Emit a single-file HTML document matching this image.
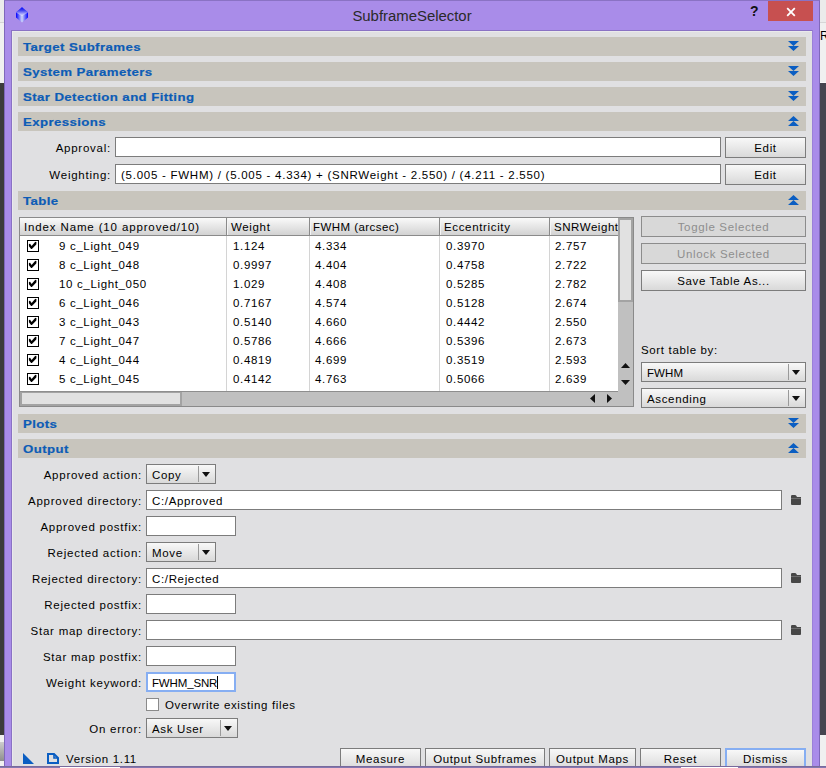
<!DOCTYPE html>
<html><head><meta charset="utf-8">
<style>
*{margin:0;padding:0;box-sizing:border-box}
html,body{width:826px;height:768px;overflow:hidden;background:#f0f0f0}
body{position:relative;font-family:"Liberation Sans",sans-serif;font-size:11.5px;color:#000;letter-spacing:0.65px}
.a{position:absolute}
.frame{left:4px;top:0;width:816px;height:768px;background:#a98ce9;border-left:1px solid #7f68bb;border-right:1px solid #7f68bb;border-top:1px solid #8a72c4}
.content{left:11px;top:30px;width:802px;height:737px;background:#e0e0e2;border-left:1px solid #8a72c4;border-top:1px solid #8a72c4;border-right:1px solid #9a80d8;border-bottom:1px solid #6f5c9f;box-shadow:inset 1px 1px 0 #eaeaec}
.hdr{left:18px;width:788px;height:19px;background:#c8c5bd;color:#0d5cb6;font-weight:bold;letter-spacing:0.35px;line-height:19px;padding-left:4.5px;padding-top:1px}
.hdr span{display:inline-block;transform:scaleX(1.15);transform-origin:0 0;-webkit-text-stroke:0.2px #0d5cb6}
.lbl{text-align:right;white-space:nowrap;line-height:14px;letter-spacing:0.75px}
.inp{background:#fff;border:1px solid #7c7c7c;height:20px;line-height:20px;padding-left:5px;white-space:nowrap}
.btn{border:1px solid #7c7c7c;background:linear-gradient(#f8f8f8,#d9d9d9);height:21px;line-height:21px;text-align:center;white-space:nowrap}
.btnd{border:1px solid #8c8c8c;background:#d8d8d8;color:#8e8e8e;height:21px;line-height:21px;text-align:center}
.combo{border:1px solid #7c7c7c;background:linear-gradient(#f8f8f8,#d9d9d9);height:20px;line-height:20px;padding-left:5px;white-space:nowrap}
.combo .sep{position:absolute;top:1px;bottom:1px;width:1px;background:#9a9a9a}
.combo .arr{position:absolute;top:7px;width:0;height:0;border-left:4.6px solid transparent;border-right:4.6px solid transparent;border-top:5px solid #111}
.chev{position:absolute;right:7px;top:4px}
</style></head><body>
<!-- outside background -->
<div class="a" style="left:0;top:0;width:4px;height:22px;background:#ebebeb"></div>
<div class="a" style="left:0;top:22px;width:4px;height:1px;background:#d4d4d4"></div>
<div class="a" style="left:0;top:83px;width:4px;height:652px;background:#3c3c3c"></div>
<div class="a" style="left:0;top:742px;width:4px;height:19px;background:linear-gradient(#cdcdcd,#8e8e8e)"></div>
<div class="a" style="left:820px;top:0;width:6px;height:22px;background:#ebebeb"></div>
<div class="a" style="left:820px;top:22px;width:6px;height:1px;background:#d6d6d6"></div>
<div class="a" style="left:820px;top:82px;width:6px;height:1px;background:#fafafa"></div>
<div class="a" style="left:820px;top:83px;width:6px;height:652px;background:#45454f"></div>
<div class="a" style="left:820px;top:29px;font-size:12px;letter-spacing:0;line-height:14px">R</div>
<div class="a frame"></div>
<!-- title bar -->
<svg class="a" style="left:15px;top:6px" width="14" height="17" viewBox="0 0 14 17">
<defs><linearGradient id="gy" x1="0" y1="0" x2="0" y2="1"><stop offset="0" stop-color="#0000ff"/><stop offset="0.35" stop-color="#3a3af0"/><stop offset="1" stop-color="#e8e8ff"/></linearGradient>
<linearGradient id="gs" x1="0" y1="0" x2="1" y2="0"><stop offset="0" stop-color="#0000ff"/><stop offset="0.45" stop-color="#c0c4f8"/><stop offset="0.55" stop-color="#c0c4f8"/><stop offset="1" stop-color="#0000ff"/></linearGradient></defs>
<polygon points="7,1 13,6.5 13,11.5 7,16.5 1,11.5 1,6.5" fill="url(#gs)"/>
<polygon points="7,1 13,6.5 7,10 1,6.5" fill="url(#gy)"/>
</svg>
<div class="a" style="left:-1px;top:6px;width:826px;text-align:center;font-size:14.9px;letter-spacing:0;color:#2a2a2a;line-height:20px">SubframeSelector</div>
<div class="a" style="left:750px;top:3px;font-weight:bold;font-size:14px;letter-spacing:0;color:#111;line-height:16px">?</div>
<div class="a" style="left:768px;top:1px;width:45px;height:20px;background:#c75050"></div>
<svg class="a" style="left:786px;top:7px" width="10" height="10" viewBox="0 0 10 10"><path d="M1.2 1.2L8.8 8.8M8.8 1.2L1.2 8.8" stroke="#fff" stroke-width="1.8"/></svg>

<div class="a content"></div>
<!-- headers -->
<div class="a hdr" style="top:37px"><span>Target Subframes</span></div>
<svg class="a" style="left:788px;top:41px" width="11" height="10" viewBox="0 0 11 10"><path d="M0 0H11L5.5 5Z M0 5H11L5.5 10Z" fill="#0b5ec2"/></svg>
<div class="a hdr" style="top:62px"><span>System Parameters</span></div>
<svg class="a" style="left:788px;top:66px" width="11" height="10" viewBox="0 0 11 10"><path d="M0 0H11L5.5 5Z M0 5H11L5.5 10Z" fill="#0b5ec2"/></svg>
<div class="a hdr" style="top:87px"><span>Star Detection and Fitting</span></div>
<svg class="a" style="left:788px;top:91px" width="11" height="10" viewBox="0 0 11 10"><path d="M0 0H11L5.5 5Z M0 5H11L5.5 10Z" fill="#0b5ec2"/></svg>
<div class="a hdr" style="top:112px"><span>Expressions</span></div>
<svg class="a" style="left:788px;top:116px" width="11" height="10" viewBox="0 0 11 10"><path d="M5.5 0L11 5H0Z M5.5 5L11 10H0Z" fill="#0b5ec2"/></svg>
<div class="a hdr" style="top:191px"><span>Table</span></div>
<svg class="a" style="left:788px;top:195px" width="11" height="10" viewBox="0 0 11 10"><path d="M5.5 0L11 5H0Z M5.5 5L11 10H0Z" fill="#0b5ec2"/></svg>
<div class="a hdr" style="top:414px"><span>Plots</span></div>
<svg class="a" style="left:788px;top:418px" width="11" height="10" viewBox="0 0 11 10"><path d="M0 0H11L5.5 5Z M0 5H11L5.5 10Z" fill="#0b5ec2"/></svg>
<div class="a hdr" style="top:439px"><span>Output</span></div>
<svg class="a" style="left:788px;top:443px" width="11" height="10" viewBox="0 0 11 10"><path d="M5.5 0L11 5H0Z M5.5 5L11 10H0Z" fill="#0b5ec2"/></svg>
<!-- expressions -->
<div class="a lbl" style="left:20px;width:91px;top:141px">Approval:</div>
<div class="a inp" style="left:115px;top:137px;width:606px"></div>
<div class="a btn" style="left:725px;top:137px;width:81px">Edit</div>
<div class="a lbl" style="left:20px;width:91px;top:168px">Weighting:</div>
<div class="a inp" style="left:115px;top:164px;width:606px;letter-spacing:0.74px">(5.005 - FWHM) / (5.005 - 4.334) + (SNRWeight - 2.550) / (4.211 - 2.550)</div>
<div class="a btn" style="left:725px;top:164px;width:81px">Edit</div>
<!-- table -->
<div class="a" style="left:19px;top:217px;width:615px;height:190px;border:1px solid #8a8a8a;background:#c0c0c0"></div>
<div class="a" style="left:20px;top:218px;width:598px;height:18px;background:linear-gradient(#fafafa,#d2d2d2);border-bottom:1px solid #8a8a8a"></div>
<div class="a" style="left:20px;top:236px;width:598px;height:155px;background:#fff"></div>
<div class="a" style="left:226px;top:218px;width:1px;height:17px;background:#8a8a8a"></div>
<div class="a" style="left:227px;top:218px;width:1px;height:17px;background:#f4f4f4"></div>
<div class="a" style="left:226px;top:236px;width:1px;height:155px;background:#d4d4d4"></div>
<div class="a" style="left:309px;top:218px;width:1px;height:17px;background:#8a8a8a"></div>
<div class="a" style="left:310px;top:218px;width:1px;height:17px;background:#f4f4f4"></div>
<div class="a" style="left:309px;top:236px;width:1px;height:155px;background:#d4d4d4"></div>
<div class="a" style="left:439px;top:218px;width:1px;height:17px;background:#8a8a8a"></div>
<div class="a" style="left:440px;top:218px;width:1px;height:17px;background:#f4f4f4"></div>
<div class="a" style="left:439px;top:236px;width:1px;height:155px;background:#d4d4d4"></div>
<div class="a" style="left:549px;top:218px;width:1px;height:17px;background:#8a8a8a"></div>
<div class="a" style="left:550px;top:218px;width:1px;height:17px;background:#f4f4f4"></div>
<div class="a" style="left:549px;top:236px;width:1px;height:155px;background:#d4d4d4"></div>
<div class="a" style="left:24px;top:220px;line-height:14px;white-space:nowrap;letter-spacing:0.86px">Index Name (10 approved/10)</div>
<div class="a" style="left:231px;top:220px;line-height:14px;white-space:nowrap">Weight</div>
<div class="a" style="left:313px;top:220px;line-height:14px;white-space:nowrap;letter-spacing:0.45px">FWHM (arcsec)</div>
<div class="a" style="left:444px;top:220px;line-height:14px;white-space:nowrap">Eccentricity</div>
<div class="a" style="left:554px;top:220px;line-height:14px;white-space:nowrap;letter-spacing:0.55px">SNRWeight</div>
<svg class="a" style="left:27px;top:240px" width="12" height="12" viewBox="0 0 12 12"><rect x="0.5" y="0.5" width="11" height="11" fill="#fff" stroke="#000"/><path d="M1.9 4.1L3.1 3.8L4.6 6.1L8.3 1.8L9.5 2.3L9.3 4.5L4.9 9L4.1 9L1.9 6.3Z" fill="#000"/></svg>
<div class="a" style="left:59px;top:239px;line-height:14px;white-space:nowrap">9 c_Light_049</div>
<div class="a" style="left:233px;top:239px;line-height:14px;white-space:nowrap">1.124</div>
<div class="a" style="left:315px;top:239px;line-height:14px;white-space:nowrap">4.334</div>
<div class="a" style="left:446px;top:239px;line-height:14px;white-space:nowrap">0.3970</div>
<div class="a" style="left:555px;top:239px;line-height:14px;white-space:nowrap">2.757</div>
<svg class="a" style="left:27px;top:259px" width="12" height="12" viewBox="0 0 12 12"><rect x="0.5" y="0.5" width="11" height="11" fill="#fff" stroke="#000"/><path d="M1.9 4.1L3.1 3.8L4.6 6.1L8.3 1.8L9.5 2.3L9.3 4.5L4.9 9L4.1 9L1.9 6.3Z" fill="#000"/></svg>
<div class="a" style="left:59px;top:258px;line-height:14px;white-space:nowrap">8 c_Light_048</div>
<div class="a" style="left:233px;top:258px;line-height:14px;white-space:nowrap">0.9997</div>
<div class="a" style="left:315px;top:258px;line-height:14px;white-space:nowrap">4.404</div>
<div class="a" style="left:446px;top:258px;line-height:14px;white-space:nowrap">0.4758</div>
<div class="a" style="left:555px;top:258px;line-height:14px;white-space:nowrap">2.722</div>
<svg class="a" style="left:27px;top:278px" width="12" height="12" viewBox="0 0 12 12"><rect x="0.5" y="0.5" width="11" height="11" fill="#fff" stroke="#000"/><path d="M1.9 4.1L3.1 3.8L4.6 6.1L8.3 1.8L9.5 2.3L9.3 4.5L4.9 9L4.1 9L1.9 6.3Z" fill="#000"/></svg>
<div class="a" style="left:59px;top:277px;line-height:14px;white-space:nowrap">10 c_Light_050</div>
<div class="a" style="left:233px;top:277px;line-height:14px;white-space:nowrap">1.029</div>
<div class="a" style="left:315px;top:277px;line-height:14px;white-space:nowrap">4.408</div>
<div class="a" style="left:446px;top:277px;line-height:14px;white-space:nowrap">0.5285</div>
<div class="a" style="left:555px;top:277px;line-height:14px;white-space:nowrap">2.782</div>
<svg class="a" style="left:27px;top:297px" width="12" height="12" viewBox="0 0 12 12"><rect x="0.5" y="0.5" width="11" height="11" fill="#fff" stroke="#000"/><path d="M1.9 4.1L3.1 3.8L4.6 6.1L8.3 1.8L9.5 2.3L9.3 4.5L4.9 9L4.1 9L1.9 6.3Z" fill="#000"/></svg>
<div class="a" style="left:59px;top:296px;line-height:14px;white-space:nowrap">6 c_Light_046</div>
<div class="a" style="left:233px;top:296px;line-height:14px;white-space:nowrap">0.7167</div>
<div class="a" style="left:315px;top:296px;line-height:14px;white-space:nowrap">4.574</div>
<div class="a" style="left:446px;top:296px;line-height:14px;white-space:nowrap">0.5128</div>
<div class="a" style="left:555px;top:296px;line-height:14px;white-space:nowrap">2.674</div>
<svg class="a" style="left:27px;top:316px" width="12" height="12" viewBox="0 0 12 12"><rect x="0.5" y="0.5" width="11" height="11" fill="#fff" stroke="#000"/><path d="M1.9 4.1L3.1 3.8L4.6 6.1L8.3 1.8L9.5 2.3L9.3 4.5L4.9 9L4.1 9L1.9 6.3Z" fill="#000"/></svg>
<div class="a" style="left:59px;top:315px;line-height:14px;white-space:nowrap">3 c_Light_043</div>
<div class="a" style="left:233px;top:315px;line-height:14px;white-space:nowrap">0.5140</div>
<div class="a" style="left:315px;top:315px;line-height:14px;white-space:nowrap">4.660</div>
<div class="a" style="left:446px;top:315px;line-height:14px;white-space:nowrap">0.4442</div>
<div class="a" style="left:555px;top:315px;line-height:14px;white-space:nowrap">2.550</div>
<svg class="a" style="left:27px;top:335px" width="12" height="12" viewBox="0 0 12 12"><rect x="0.5" y="0.5" width="11" height="11" fill="#fff" stroke="#000"/><path d="M1.9 4.1L3.1 3.8L4.6 6.1L8.3 1.8L9.5 2.3L9.3 4.5L4.9 9L4.1 9L1.9 6.3Z" fill="#000"/></svg>
<div class="a" style="left:59px;top:334px;line-height:14px;white-space:nowrap">7 c_Light_047</div>
<div class="a" style="left:233px;top:334px;line-height:14px;white-space:nowrap">0.5786</div>
<div class="a" style="left:315px;top:334px;line-height:14px;white-space:nowrap">4.666</div>
<div class="a" style="left:446px;top:334px;line-height:14px;white-space:nowrap">0.5396</div>
<div class="a" style="left:555px;top:334px;line-height:14px;white-space:nowrap">2.673</div>
<svg class="a" style="left:27px;top:354px" width="12" height="12" viewBox="0 0 12 12"><rect x="0.5" y="0.5" width="11" height="11" fill="#fff" stroke="#000"/><path d="M1.9 4.1L3.1 3.8L4.6 6.1L8.3 1.8L9.5 2.3L9.3 4.5L4.9 9L4.1 9L1.9 6.3Z" fill="#000"/></svg>
<div class="a" style="left:59px;top:353px;line-height:14px;white-space:nowrap">4 c_Light_044</div>
<div class="a" style="left:233px;top:353px;line-height:14px;white-space:nowrap">0.4819</div>
<div class="a" style="left:315px;top:353px;line-height:14px;white-space:nowrap">4.699</div>
<div class="a" style="left:446px;top:353px;line-height:14px;white-space:nowrap">0.3519</div>
<div class="a" style="left:555px;top:353px;line-height:14px;white-space:nowrap">2.593</div>
<svg class="a" style="left:27px;top:373px" width="12" height="12" viewBox="0 0 12 12"><rect x="0.5" y="0.5" width="11" height="11" fill="#fff" stroke="#000"/><path d="M1.9 4.1L3.1 3.8L4.6 6.1L8.3 1.8L9.5 2.3L9.3 4.5L4.9 9L4.1 9L1.9 6.3Z" fill="#000"/></svg>
<div class="a" style="left:59px;top:372px;line-height:14px;white-space:nowrap">5 c_Light_045</div>
<div class="a" style="left:233px;top:372px;line-height:14px;white-space:nowrap">0.4142</div>
<div class="a" style="left:315px;top:372px;line-height:14px;white-space:nowrap">4.763</div>
<div class="a" style="left:446px;top:372px;line-height:14px;white-space:nowrap">0.5066</div>
<div class="a" style="left:555px;top:372px;line-height:14px;white-space:nowrap">2.639</div>
<div class="a" style="left:618px;top:218px;width:15px;height:84px;background:#e1e1e1;border:2px solid #a3a3a3"></div>
<svg class="a" style="left:621px;top:363px" width="9" height="5" viewBox="0 0 9 5"><path d="M4.5 0L9 5H0Z" fill="#111"/></svg>
<svg class="a" style="left:621px;top:380px" width="9" height="5" viewBox="0 0 9 5"><path d="M0 0H9L4.5 5Z" fill="#111"/></svg>
<div class="a" style="left:20px;top:391px;width:598px;height:1px;background:#8e8e8e"></div>
<div class="a" style="left:20px;top:392px;width:162px;height:14px;background:#e1e1e1;border:2px solid #a3a3a3;border-top:1px solid #a3a3a3"></div>
<svg class="a" style="left:590px;top:394px" width="5" height="9" viewBox="0 0 5 9"><path d="M5 0V9L0 4.5Z" fill="#111"/></svg>
<svg class="a" style="left:607px;top:394px" width="5" height="9" viewBox="0 0 5 9"><path d="M0 0V9L5 4.5Z" fill="#111"/></svg>
<!-- right panel -->
<div class="a btnd" style="left:641px;top:216px;width:165px">Toggle Selected</div>
<div class="a btnd" style="left:641px;top:243px;width:165px">Unlock Selected</div>
<div class="a btn" style="left:641px;top:270px;width:165px">Save Table As...</div>
<div class="a" style="left:641px;top:343px;line-height:14px;white-space:nowrap">Sort table by:</div>
<div class="a combo" style="left:641px;top:362px;width:165px"><span style="letter-spacing:0.1px">FWHM</span><div class="sep" style="left:146px"></div><div class="arr" style="left:150px"></div></div>
<div class="a combo" style="left:641px;top:388px;width:165px">Ascending<div class="sep" style="left:146px"></div><div class="arr" style="left:150px"></div></div>
<!-- output -->
<div class="a lbl" style="left:14px;width:128px;top:468px">Approved action:</div>
<div class="a combo" style="left:146px;top:464px;width:70px">Copy<div class="sep" style="left:51px"></div><div class="arr" style="left:55px"></div></div>
<div class="a lbl" style="left:14px;width:128px;top:494px">Approved directory:</div>
<div class="a inp" style="left:146px;top:490px;width:636px">C:/Approved</div>
<svg class="a" style="left:791px;top:495px" width="10" height="10" viewBox="0 0 10 10"><path d="M0 3V1.2Q0 0 1.2 0H4Q4.8 0 5.3 0.8L6 2H10V3Z" fill="#474747"/><path d="M0 3.3H10V9Q10 10 9 10H1Q0 10 0 9Z" fill="#474747"/></svg>
<div class="a lbl" style="left:14px;width:128px;top:520px">Approved postfix:</div>
<div class="a inp" style="left:146px;top:516px;width:90px"></div>
<div class="a lbl" style="left:14px;width:128px;top:546px">Rejected action:</div>
<div class="a combo" style="left:146px;top:542px;width:70px">Move<div class="sep" style="left:51px"></div><div class="arr" style="left:55px"></div></div>
<div class="a lbl" style="left:14px;width:128px;top:572px">Rejected directory:</div>
<div class="a inp" style="left:146px;top:568px;width:636px">C:/Rejected</div>
<svg class="a" style="left:791px;top:573px" width="10" height="10" viewBox="0 0 10 10"><path d="M0 3V1.2Q0 0 1.2 0H4Q4.8 0 5.3 0.8L6 2H10V3Z" fill="#474747"/><path d="M0 3.3H10V9Q10 10 9 10H1Q0 10 0 9Z" fill="#474747"/></svg>
<div class="a lbl" style="left:14px;width:128px;top:598px">Rejected postfix:</div>
<div class="a inp" style="left:146px;top:594px;width:90px"></div>
<div class="a lbl" style="left:14px;width:128px;top:624px">Star map directory:</div>
<div class="a inp" style="left:146px;top:620px;width:636px"></div>
<svg class="a" style="left:791px;top:625px" width="10" height="10" viewBox="0 0 10 10"><path d="M0 3V1.2Q0 0 1.2 0H4Q4.8 0 5.3 0.8L6 2H10V3Z" fill="#474747"/><path d="M0 3.3H10V9Q10 10 9 10H1Q0 10 0 9Z" fill="#474747"/></svg>
<div class="a lbl" style="left:14px;width:128px;top:650px">Star map postfix:</div>
<div class="a inp" style="left:146px;top:646px;width:90px"></div>
<div class="a lbl" style="left:14px;width:128px;top:676px">Weight keyword:</div>
<div class="a inp" style="left:146px;top:672px;width:90px;border:2px solid #86aef2;padding-left:4px;line-height:18px;letter-spacing:-0.15px">FWHM_SNR</div>
<div class="a" style="left:217px;top:676px;width:1px;height:13px;background:#000"></div>
<div class="a" style="left:146px;top:698px;width:13px;height:13px;background:#fff;border:1px solid #8a8a8a"></div>
<div class="a" style="left:165px;top:698px;line-height:14px;white-space:nowrap">Overwrite existing files</div>
<div class="a lbl" style="left:14px;width:128px;top:722px">On error:</div>
<div class="a combo" style="left:146px;top:718px;width:92px">Ask User<div class="sep" style="left:73px"></div><div class="arr" style="left:77px"></div></div>
<!-- bottom -->
<svg class="a" style="left:23px;top:753px" width="11" height="11" viewBox="0 0 11 11"><path d="M0 0L11 11H0Z" fill="#0b5ec2"/></svg>
<svg class="a" style="left:47px;top:753px" width="12" height="11" viewBox="0 0 12 11"><path d="M1 1H7L11 5V10H1Z" fill="none" stroke="#0b5ec2" stroke-width="2"/><path d="M7 1V5H11" fill="none" stroke="#0b5ec2" stroke-width="1.6"/></svg>
<div class="a" style="left:66px;top:752px;line-height:14px;white-space:nowrap">Version 1.11</div>
<div class="a btn" style="left:340px;top:748px;width:81px;height:22px">Measure</div>
<div class="a btn" style="left:425px;top:748px;width:120px;height:22px">Output Subframes</div>
<div class="a btn" style="left:549px;top:748px;width:87px;height:22px">Output Maps</div>
<div class="a btn" style="left:640px;top:748px;width:81px;height:22px">Reset</div>
<div class="a btn" style="left:725px;top:748px;width:81px;height:22px;border:2px solid #86aef2;line-height:19px">Dismiss</div>
<div class="a" style="left:0;top:766px;width:826px;height:1px;background:#786a9c"></div>
<div class="a" style="left:0;top:767px;width:826px;height:1px;background:#8478b0"></div>
<div class="a" style="left:60px;top:767px;width:60px;height:1px;background:#fff"></div>
<div class="a" style="left:681px;top:767px;width:57px;height:1px;background:#fff"></div>
</body></html>
